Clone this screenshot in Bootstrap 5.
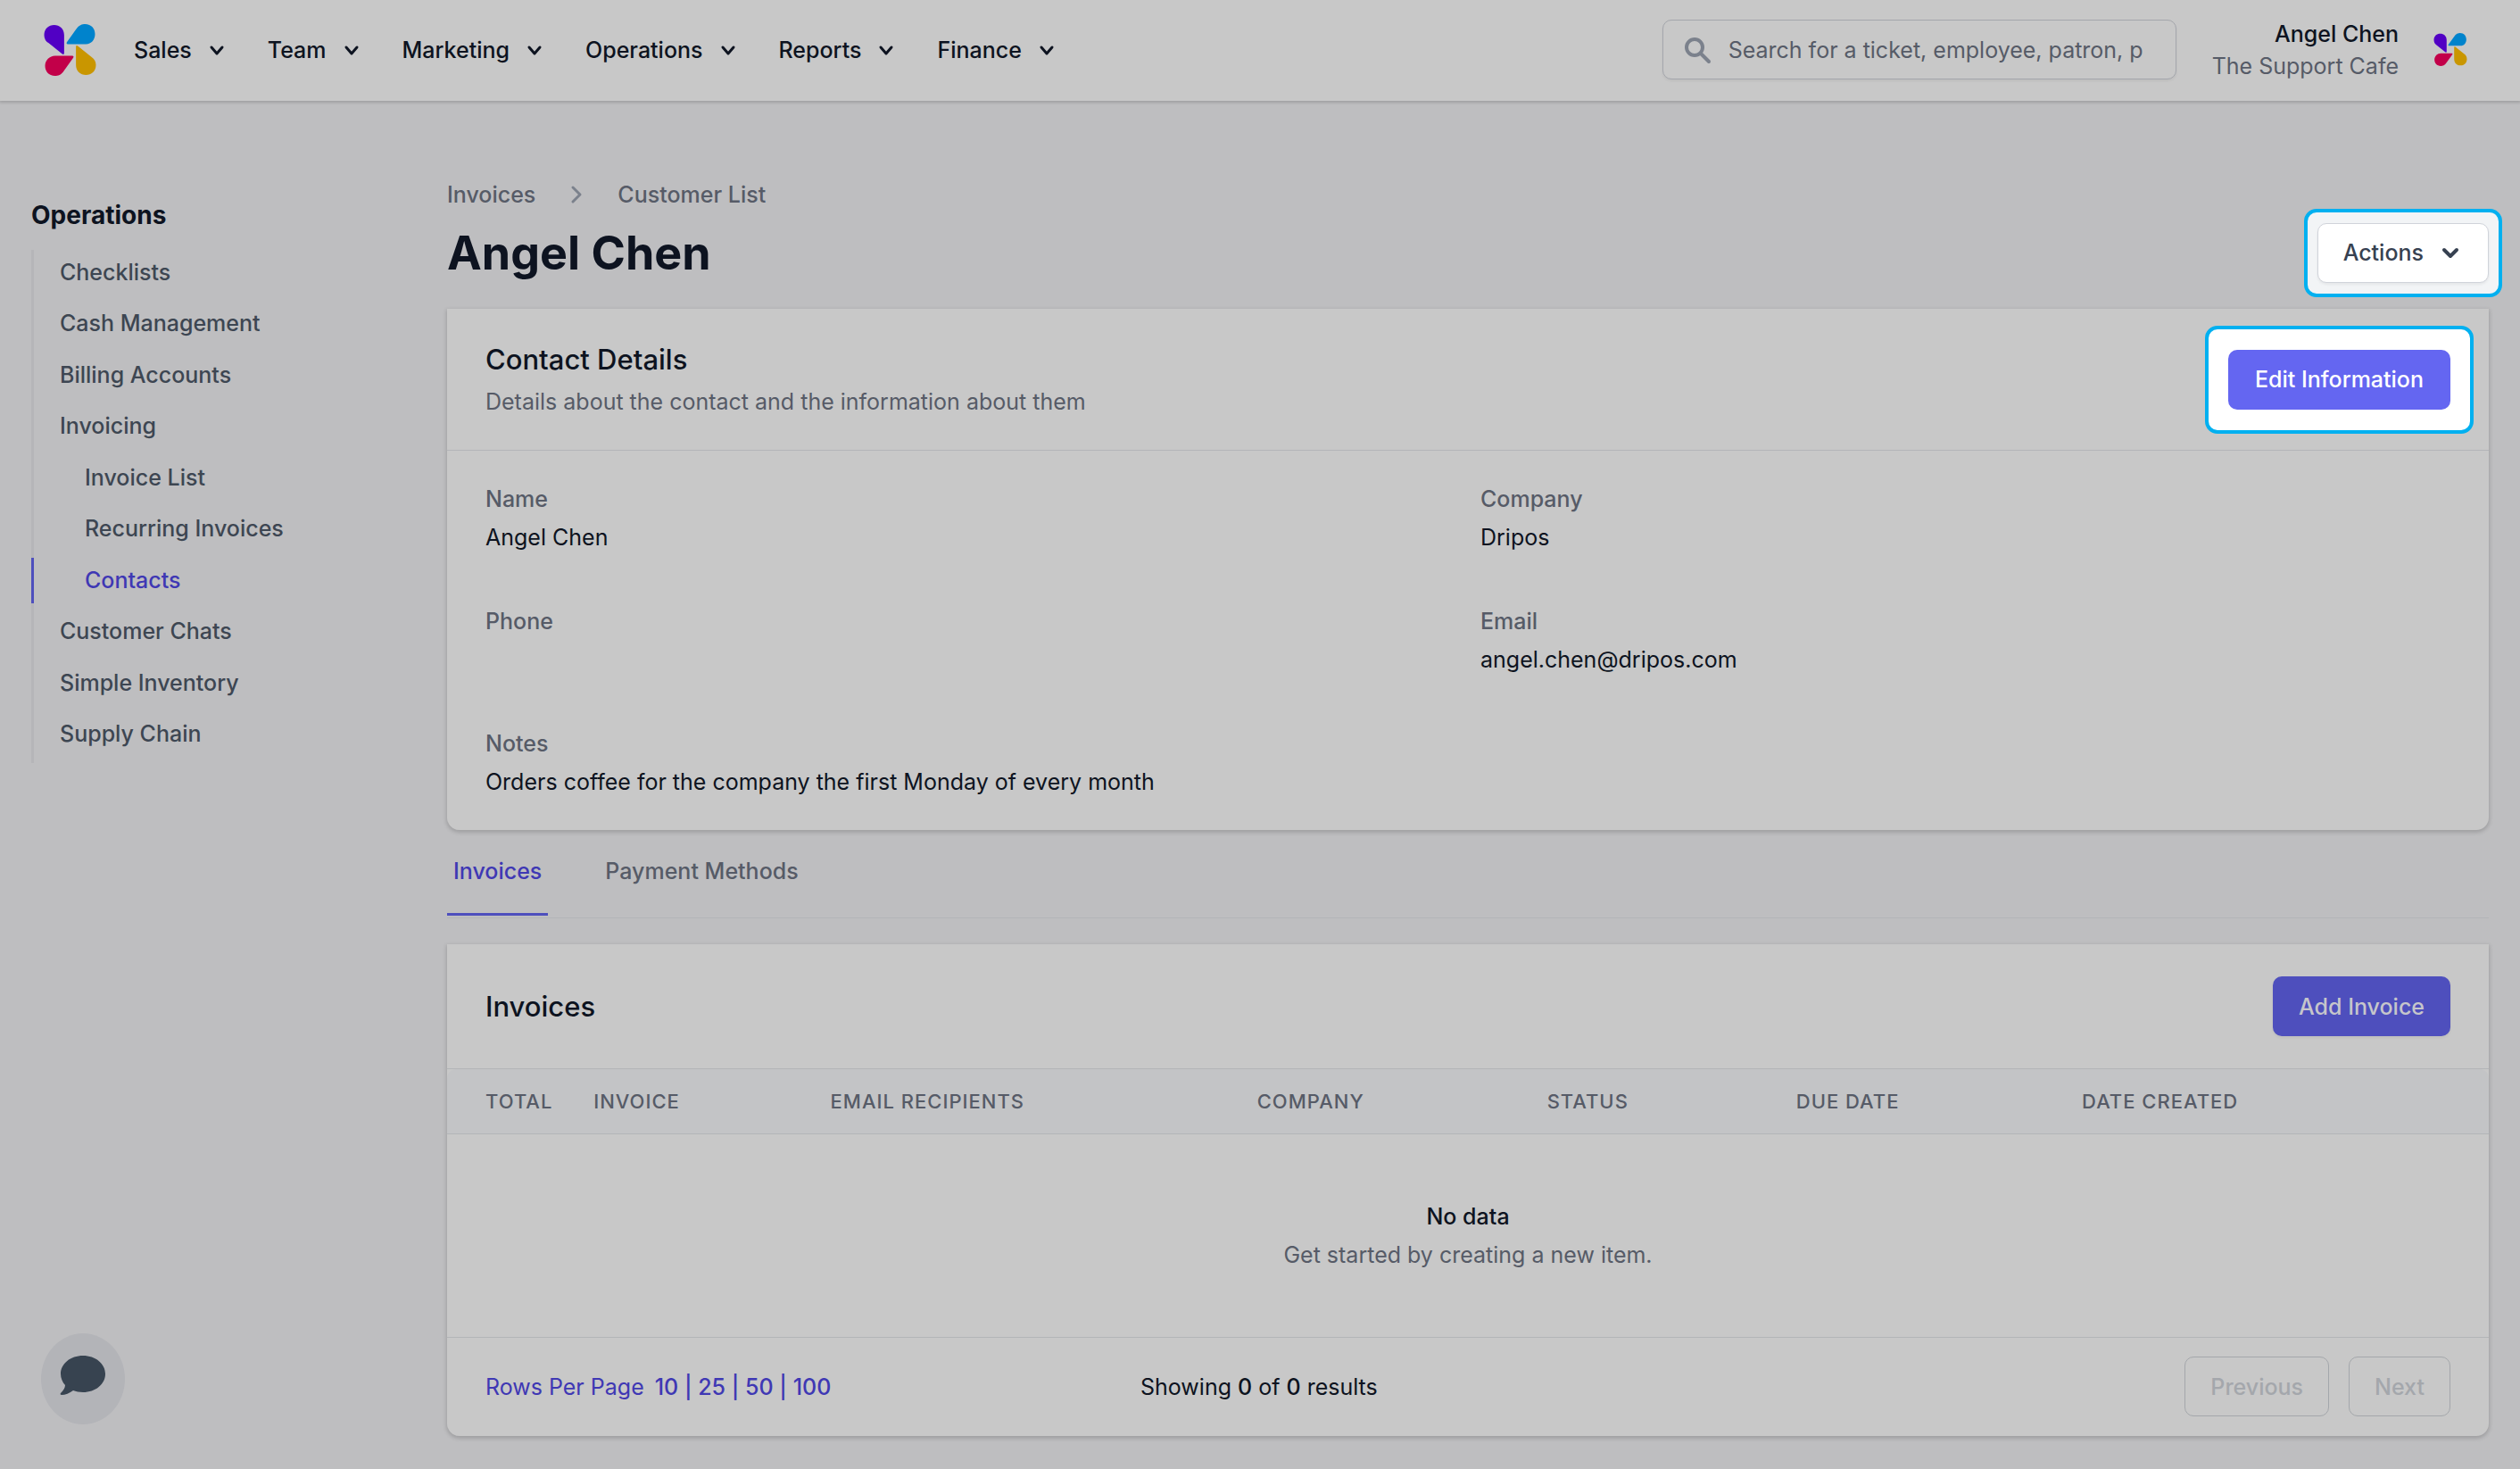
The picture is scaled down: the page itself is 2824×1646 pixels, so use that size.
<!DOCTYPE html>
<html lang="en">
<head>
<meta charset="utf-8">
<meta name="viewport" content="width=device-width, initial-scale=1">
<title>Angel Chen – Contacts</title>
<link href="https://cdn.jsdelivr.net/npm/bootstrap@5.3.0/dist/css/bootstrap.min.css" rel="stylesheet">
<style>
:root{--ink:#0d1320;--slate:#3d4652;--muted:#565b67;--brand:#3f38b4;--accent:#4e4fbd;--surface:#c8c8c8;--line:#b3b5b8;--pad:43px}
body{font-family:Inter,"Liberation Sans",sans-serif;font-size:25px;line-height:36px;color:var(--ink);background:#bebec0}
a{color:inherit;text-decoration:none}
.topbar{background:var(--surface);height:113px;padding:0 59px 2px 49px;box-shadow:0 1px 3px 1px rgba(0,0,0,.16);position:relative}
.mainmenu{gap:43px;margin-left:42px}
.menu-btn{background:none;border:0;padding:0;color:var(--ink);font-weight:500;display:flex;align-items:center;gap:14px}
.chev{width:28px;height:28px;fill:none;stroke:currentColor;stroke-width:3;stroke-linecap:round;stroke-linejoin:round}
.searchbox{width:576px}
.searchbox svg{position:absolute;left:24px;top:18px;width:32px;height:32px;pointer-events:none}
.searchbox .form-control{height:67px;background:var(--surface);border:1px solid #a4a6ac;border-radius:10px;font-size:25px;padding:0 8px 0 73px;box-shadow:0 2px 3px rgba(0,0,0,.05)}
.searchbox .form-control::placeholder{color:var(--muted);opacity:1}
.account{margin:0 39px 0 40px}
.fw-500{font-weight:500}
.text-soft{color:var(--muted)}
.sidebar{width:466px;flex:none;padding-top:53px}
.sidebar h2{font-size:28px;line-height:36px;font-weight:700;margin:0 0 21px}
.rail{border-left:3px solid #b5b5b8;margin:0;padding:0;list-style:none;display:flow-root}
.rail li{margin-bottom:6px}
.rail li:nth-child(even){margin-bottom:7px}
.rail a{display:block;line-height:51px;padding-left:29px;margin-left:-3px;border-left:3px solid transparent;color:var(--slate);font-weight:500}
.rail a.sub{padding-left:57px}
.rail a.active{border-color:var(--accent);color:var(--brand)}
.page{padding:57px 35px 36px}
.content{min-width:0;padding-top:30px}
.crumbs{gap:34px;line-height:36px}
h1{font-size:52px;line-height:64px;font-weight:700;margin:0;padding-top:2px}
.titlebar{margin:14px 0 30px;height:66px}
.panel{background:var(--surface);border-radius:0 0 14px 14px;box-shadow:0 2px 4px 1px rgba(0,0,0,.16)}
.panel-head{padding:36px var(--pad);border-bottom:1px solid var(--line)}
.panel-title{font-size:31px;line-height:42px;font-weight:500;margin:0}
.ui-btn{height:67px;border-radius:10px;font-size:25px;line-height:36px;font-weight:500;padding:0 28px;border:1px solid transparent;display:inline-flex;align-items:center}
.ui-edit{background:#6466f1;color:#fff;padding:0 29px}
.ui-add{background:var(--accent);color:#c6c6cb;box-shadow:0 2px 3px rgba(0,0,0,.05)}
.ui-light{background:#fff;border-color:#d0d3da;color:#374151;gap:16px;box-shadow:0 2px 3px rgba(0,0,0,.06)}
.ui-off,.ui-off:disabled{background:none;border-color:#a4a7ab;color:#a4a7ac;opacity:1}
.spot{position:relative;isolation:isolate}
.spot::before{content:"";position:absolute;inset:-27px -26px;border:4px solid #00b0f0;border-radius:14px;background:#fff;z-index:-1}
.spot-sm::before{inset:-16px -15px;background:#f2f4f6}
.fields{display:grid;grid-template-columns:1fr 1fr;gap:58px 28px;padding:36px var(--pad);margin:0}
.fields dt{font-weight:500;color:var(--muted)}
.fields dd{margin:7px 0 0;min-height:36px}
.tabset{margin-top:28px;padding-bottom:2px;gap:57px;border-bottom:1px solid var(--line);margin-bottom:29px}
.tabset a{padding:0 7px 29px;border-bottom:3px solid transparent;font-weight:500;color:var(--muted)}
.tabset a.active{color:var(--brand);border-color:var(--accent)}
.grid-table{width:100%;table-layout:fixed;border-collapse:separate;border-spacing:0}
.grid-table th{font-size:22px;line-height:28px;letter-spacing:1px;font-weight:500;color:var(--muted);background:#c3c4c6;padding:22px 0 22px 20px;border-bottom:1px solid var(--line);text-transform:uppercase;white-space:nowrap}
.grid-table th:first-child{padding-left:var(--pad);border-top-left-radius:10px}
.grid-table th:last-child{border-top-right-radius:10px}
.grid-table td{padding:74px 0;text-align:center;border-bottom:1px solid var(--line)}
.grid-table p{margin:0 0 7px}
.pager{padding:21px var(--pad) 22px}
.pager .row{--bs-gutter-x:0}
.pager .btn-pair{gap:22px}
.rows-link{color:var(--brand);gap:12px}
.chat-btn{position:fixed;left:46px;bottom:50px;width:94px;height:102px;border-radius:50%;border:0;background:#b3b4b8;padding:0 0 6px}
</style>
</head>
<body>
<svg width="0" height="0" class="position-absolute" aria-hidden="true">
  <symbol id="petals" viewBox="0 0 57 57">
    <path fill="#5100c4" d="M0 12C0 5 5 1 11 1s11 4 11 11v20q0 2-2 1L5 21Q0 18 0 12Z"/>
    <path fill="#0083cc" d="M35 6C38 1 42 0 45 0c7 0 11 5 11 11s-4 11-10 11H26q-2 0-1-2Z"/>
    <path fill="#c20049" d="M12 35h19q2 0 1 2L22 51c-3 5-7 6-10 6C5 57 1 52 1 46s5-11 11-11Z"/>
    <path fill="#c99600" d="M35 45V25q0-2 2-1l15 12c3 2 5 5 5 9 0 7-5 11-11 11s-11-4-11-11Z"/>
  </symbol>
  <symbol id="down" viewBox="0 0 28 28"><path d="m8 11 6 7 6-7"/></symbol>
</svg>

<header class="topbar d-flex align-items-center">
  <a href="#" aria-label="Home" class="d-flex"><svg width="59" height="58"><use href="#petals"/></svg></a>
  <nav class="mainmenu d-flex" aria-label="Main">
    <button class="menu-btn">Sales <svg class="chev"><use href="#down"/></svg></button>
    <button class="menu-btn">Team <svg class="chev"><use href="#down"/></svg></button>
    <button class="menu-btn">Marketing <svg class="chev"><use href="#down"/></svg></button>
    <button class="menu-btn">Operations <svg class="chev"><use href="#down"/></svg></button>
    <button class="menu-btn">Reports <svg class="chev"><use href="#down"/></svg></button>
    <button class="menu-btn">Finance <svg class="chev"><use href="#down"/></svg></button>
  </nav>
  <div class="searchbox position-relative ms-auto">
    <svg viewBox="0 0 32 32" fill="none" stroke="#7b818c" stroke-width="4" stroke-linecap="round" aria-hidden="true"><circle cx="12" cy="13" r="9"/><path d="m19 20 9 9"/></svg>
    <input type="text" class="form-control" aria-label="Search" placeholder="Search for a ticket, employee, patron, p">
  </div>
  <div class="account text-end">
    <div class="fw-500">Angel Chen</div>
    <div class="text-soft">The Support Cafe</div>
  </div>
  <a href="#" aria-label="Account" class="d-flex"><svg width="38" height="37"><use href="#petals"/></svg></a>
</header>

<div class="page d-flex">
  <aside class="sidebar">
    <h2>Operations</h2>
    <ul class="rail">
      <li><a href="#">Checklists</a></li>
      <li><a href="#">Cash Management</a></li>
      <li><a href="#">Billing Accounts</a></li>
      <li><a href="#">Invoicing</a></li>
      <li><a href="#" class="sub">Invoice List</a></li>
      <li><a href="#" class="sub">Recurring Invoices</a></li>
      <li><a href="#" class="sub active" aria-current="page">Contacts</a></li>
      <li><a href="#">Customer Chats</a></li>
      <li><a href="#">Simple Inventory</a></li>
      <li><a href="#">Supply Chain</a></li>
    </ul>
  </aside>

  <main class="content flex-grow-1">
    <nav class="crumbs d-flex align-items-center text-soft fw-500" aria-label="Breadcrumb">
      <a href="#">Invoices</a>
      <svg width="24" height="24" viewBox="0 0 24 24" fill="none" stroke="#7b818c" stroke-width="3" stroke-linecap="round" stroke-linejoin="round" aria-hidden="true"><path d="m8 4 8 8-8 8"/></svg>
      <a href="#">Customer List</a>
    </nav>
    <div class="titlebar d-flex justify-content-between align-items-center">
      <h1>Angel Chen</h1>
      <div class="spot spot-sm d-flex"><button class="ui-btn ui-light">Actions <svg class="chev" viewBox="0 0 28 28"><path stroke-width="4" d="m7 11 7 7 7-7"/></svg></button></div>
    </div>

    <section class="panel">
      <div class="panel-head d-flex justify-content-between align-items-center">
        <div>
          <h3 class="panel-title mb-2">Contact Details</h3>
          <p class="m-0 text-soft">Details about the contact and the information about them</p>
        </div>
        <div class="spot d-flex"><button class="ui-btn ui-edit">Edit Information</button></div>
      </div>
      <dl class="fields">
        <div><dt>Name</dt><dd>Angel Chen</dd></div>
        <div><dt>Company</dt><dd>Dripos</dd></div>
        <div><dt>Phone</dt><dd></dd></div>
        <div><dt>Email</dt><dd>angel.chen@dripos.com</dd></div>
        <div><dt>Notes</dt><dd>Orders coffee for the company the first Monday of every month</dd></div>
      </dl>
    </section>

    <nav class="tabset d-flex" aria-label="Contact sections">
      <a href="#" class="active">Invoices</a>
      <a href="#">Payment Methods</a>
    </nav>

    <section class="panel">
      <div class="panel-head d-flex justify-content-between align-items-center">
        <h3 class="panel-title">Invoices</h3>
        <button class="ui-btn ui-add">Add Invoice</button>
      </div>
      <table class="grid-table">
        <colgroup><col style="width:6.3%"><col style="width:11.6%"><col style="width:20.9%"><col style="width:14.2%"><col style="width:12.2%"><col style="width:14%"><col></colgroup>
        <thead><tr><th scope="col">Total</th><th scope="col">Invoice</th><th scope="col">Email Recipients</th><th scope="col">Company</th><th scope="col">Status</th><th scope="col">Due Date</th><th scope="col">Date Created</th></tr></thead>
        <tbody><tr><td colspan="7"><p class="fw-500">No data</p><div class="text-soft">Get started by creating a new item.</div></td></tr></tbody>
      </table>
      <div class="pager">
        <div class="row align-items-center">
          <div class="col-4 rows-link d-flex"><span>Rows Per Page</span><span class="fw-500"><a href="#">10</a> | <a href="#">25</a> | <a href="#">50</a> | <a href="#">100</a></span></div>
          <div class="col-4">Showing <span class="fw-500">0</span> of <span class="fw-500">0</span> results</div>
          <div class="col-4 btn-pair d-flex justify-content-end"><button class="ui-btn ui-off" disabled>Previous</button><button class="ui-btn ui-off" disabled>Next</button></div>
        </div>
      </div>
    </section>
  </main>
</div>

<button class="chat-btn" aria-label="Open chat"><svg width="52" height="46" viewBox="0 0 52 46"><path fill="#374350" d="M26 0c14 0 25 9 25 20.500S40 41 26 41c-4 0-8-1-11-2-4 3-9 5-13 5-1 0-2-1-1-2 3-3 5-6 5-9C3 30 1 25 1 20.500 1 9 12 0 26 0Z"/></svg></button>
<script src="https://cdn.jsdelivr.net/npm/bootstrap@5.3.0/dist/js/bootstrap.bundle.min.js"></script>
</body>
</html>
